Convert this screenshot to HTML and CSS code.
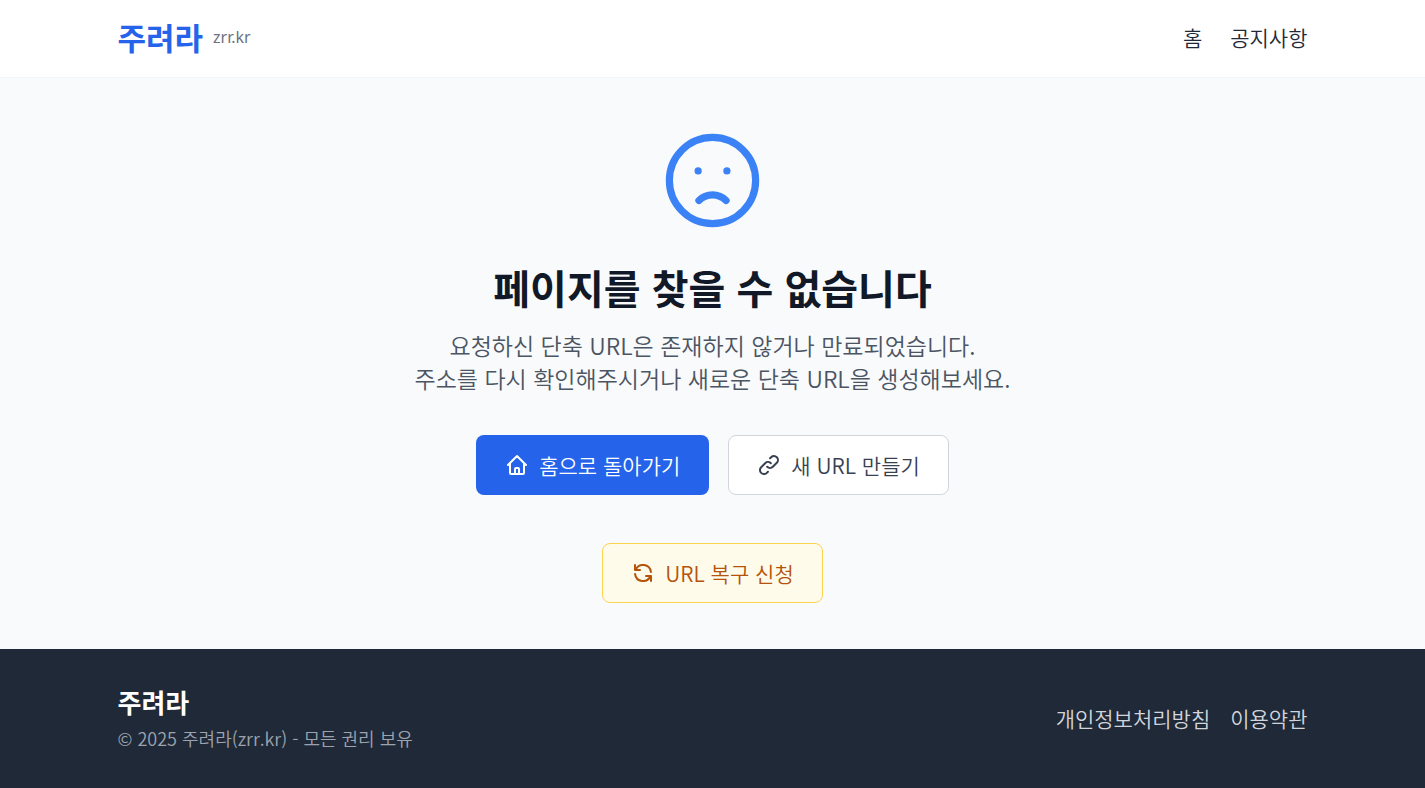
FILE: index.html
```html
<!DOCTYPE html>
<html lang="ko">
<head>
  <meta charset="UTF-8">
  <meta name="viewport" content="width=device-width, initial-scale=1.0">
  <title>페이지를 찾을 수 없습니다 - 주려라</title>
  <link rel="stylesheet" href="styles.css">
</head>
<body>

  <!-- Header -->
  <header class="header">
    <div class="container">
      <a href="/" class="brand">
        <span class="brand-name">주려라</span>
        <span class="brand-domain">zrr.kr</span>
      </a>
      <nav class="nav">
        <a href="/">홈</a>
        <a href="/notice">공지사항</a>
      </nav>
    </div>
  </header>

  <!-- 404 -->
  <main class="main">
    <svg class="face" viewBox="0 0 24 24" fill="none" stroke="currentColor" stroke-width="1.5" stroke-linecap="round" stroke-linejoin="round" aria-hidden="true">
      <path d="M9.172 16.172a4 4 0 015.656 0M9 10h.01M15 10h.01M21 12a9 9 0 11-18 0 9 9 0 0118 0z"/>
    </svg>
    <h1>페이지를 찾을 수 없습니다</h1>
    <p class="message">
      요청하신 단축 URL은 존재하지 않거나 만료되었습니다.<br>
      주소를 다시 확인해주시거나 새로운 단축 URL을 생성해보세요.
    </p>

    <div class="actions">
      <a href="/" class="btn btn-primary">
        <svg class="icon" viewBox="0 0 24 24" fill="none" stroke="currentColor" stroke-width="2" stroke-linecap="round" stroke-linejoin="round" aria-hidden="true">
          <path d="M3 12l9-9 9 9M5 10v10a1 1 0 001 1h12a1 1 0 001-1V10M10 21v-5a1 1 0 011-1h2a1 1 0 011 1v5"/>
        </svg>
        홈으로 돌아가기
      </a>
      <a href="/new" class="btn btn-outline">
        <svg class="icon" viewBox="0 0 24 24" fill="none" stroke="currentColor" stroke-width="2" stroke-linecap="round" stroke-linejoin="round" aria-hidden="true">
          <path d="M13.828 10.172a4 4 0 00-5.656 0l-4 4a4 4 0 105.656 5.656l1.102-1.101m-.758-4.899a4 4 0 005.656 0l4-4a4 4 0 00-5.656-5.656l-1.1 1.1"/>
        </svg>
        새 URL 만들기
      </a>
    </div>

    <a href="/restore" class="btn btn-warning">
      <svg class="icon" viewBox="0 0 24 24" fill="none" stroke="currentColor" stroke-width="2" stroke-linecap="round" stroke-linejoin="round" aria-hidden="true">
        <path d="M4 4v5h.582m15.356 2A8.001 8.001 0 004.582 9m0 0H9m11 11v-5h-.581m0 0a8.003 8.003 0 01-15.357-2m15.357 2H15"/>
      </svg>
      URL 복구 신청
    </a>
  </main>

  <!-- Footer -->
  <footer class="footer">
    <div class="container">
      <div>
        <h2 class="footer-title">주려라</h2>
        <p class="copyright">© 2025 주려라(zrr.kr) - 모든 권리 보유</p>
      </div>
      <div class="footer-links">
        <a href="/privacy">개인정보처리방침</a>
        <a href="/terms">이용약관</a>
      </div>
    </div>
  </footer>

</body>
</html>
```
FILE: styles.css
```css
* {
  box-sizing: border-box;
  margin: 0;
  padding: 0;
}

body {
  min-height: 100vh;
  display: flex;
  flex-direction: column;
  background: #f9fafb;
  color: #1f2937;
  font-family: "Noto Sans CJK KR", "Noto Sans", sans-serif;
  font-size: 21px;
  font-weight: 350;
  line-height: 28px;
}

a {
  color: inherit;
  text-decoration: none;
}

.container {
  width: 100%;
  max-width: 1230px;
  margin: 0 auto;
  padding: 0 20px;
  display: flex;
  align-items: center;
  justify-content: space-between;
}

/* Header */
.header {
  background: #fff;
  padding: 18px 0 22px;
  border-bottom: 1px solid #f3f4f6;
}

.brand {
  display: flex;
  align-items: center;
  gap: 10px;
}

.brand-name {
  color: #2563eb;
  font-size: 31px;
  font-weight: 700;
  line-height: 37px;
}

.brand-domain {
  color: #6b7280;
  font-family: "Noto Sans", sans-serif;
  font-size: 16px;
  font-weight: 400;
  line-height: 30px;
}

.nav {
  display: flex;
  gap: 28px;
}

/* Main */
.main {
  flex: 1;
  display: flex;
  flex-direction: column;
  align-items: center;
  padding: 45px 20px;
  text-align: center;
}

.face {
  width: 115px;
  height: 115px;
  color: #3b82f6;
}

h1 {
  margin-top: 27px;
  color: #111827;
  font-size: 40px;
  font-weight: 700;
  line-height: 44px;
}

.message {
  margin-top: 20px;
  color: #4b5563;
  font-size: 23px;
  line-height: 33px;
}

.actions {
  display: flex;
  flex-wrap: wrap;
  justify-content: center;
  gap: 19px;
  margin: 40px 0 48px;
}

.btn {
  display: inline-flex;
  align-items: center;
  gap: 10px;
  padding: 15px 28px;
  border: 1px solid transparent;
  border-radius: 8px;
}

.icon {
  width: 24px;
  height: 24px;
}

.btn-primary {
  background: #2563eb;
  color: #fff;
}

.btn-outline {
  background: #fff;
  border-color: #d1d5db;
  color: #374151;
}

.btn-warning {
  background: #fffbeb;
  border-color: #fcd34d;
  color: #b45309;
}

/* Footer */
.footer {
  background: #1f2937;
  color: #d1d5db;
  padding: 35px 0 37px;
}

.footer-title {
  margin-bottom: 5px;
  color: #fff;
  font-size: 26px;
  font-weight: 700;
  line-height: 36px;
}

.copyright {
  color: #9ca3af;
  font-size: 18px;
  line-height: 26px;
}

.footer-links {
  display: flex;
  gap: 20px;
}
```
